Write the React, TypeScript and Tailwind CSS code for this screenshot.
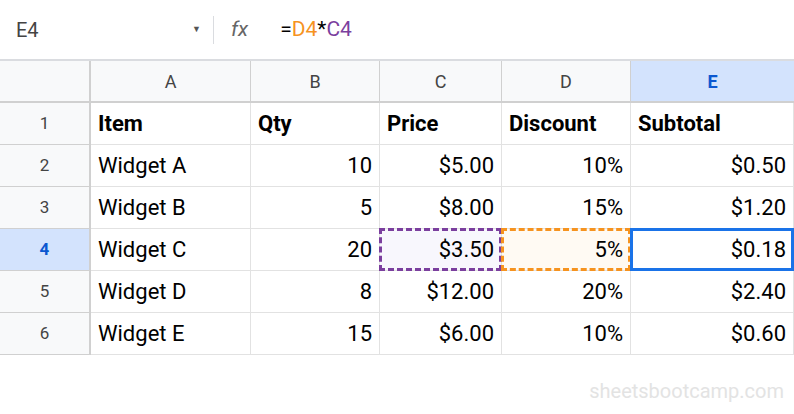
const cols = ["A", "B", "C", "D", "E"];
const rows: string[][] = [
  ["Item", "Qty", "Price", "Discount", "Subtotal"],
  ["Widget A", "10", "$5.00", "10%", "$0.50"],
  ["Widget B", "5", "$8.00", "15%", "$1.20"],
  ["Widget C", "20", "$3.50", "5%", "$0.18"],
  ["Widget D", "8", "$12.00", "20%", "$2.40"],
  ["Widget E", "15", "$6.00", "10%", "$0.60"],
];

export default function App() {
  return (
    <div className="w-[794px] h-[414px] bg-white relative overflow-hidden" style={{ fontFamily: "Roboto, Arial, sans-serif" }}>
      <div className="h-[59px] flex items-center">
        <div className="w-[213px] flex items-center pl-4 pr-3 text-[20px] text-[#444]">
          <span className="flex-1">E4</span>
          <span className="text-[9px] text-[#555]">▼</span>
        </div>
        <div className="w-px h-[28px] bg-[#dadce0]" />
        <span className="ml-[17px] text-[21px] italic text-[#666]">fx</span>
        <span className="ml-[32px] text-[21px] text-black">
          =<span className="text-[#f6931f]">D4</span>*<span className="text-[#7b3f9e]">C4</span>
        </span>
      </div>
      <div className="grid grid-cols-[91px_160px_129px_122px_129px_163px] grid-rows-[42px] auto-rows-[42px] border-t-2 border-[#dadce0]">
        <div className="bg-[#f8f9fa] border-r-2 border-b-2 border-[#d0d0d0]" />
        {cols.map((c) => (
          <div
            key={c}
            className={
              c === "E"
                ? "bg-[#d3e3fd] border-b-2 border-[#d0d0d0] flex items-center justify-center text-[18px] font-bold text-[#0b57d0]"
                : "bg-[#f8f9fa] border-r border-b-2 border-[#d0d0d0] flex items-center justify-center text-[18px] text-[#444]"
            }
          >
            {c}
          </div>
        ))}
        {rows.map((r, i) => (
          <>
            <div
              key={"h" + i}
              className={
                i === 3
                  ? "bg-[#d3e3fd] border-r-2 border-b border-[#d0d0d0] flex items-center justify-center text-[17px] font-bold text-[#0b57d0]"
                  : "bg-[#f8f9fa] border-r-2 border-b border-[#d0d0d0] flex items-center justify-center text-[17px] text-[#444]"
              }
            >
              {i + 1}
            </div>
            {r.map((v, j) => {
              const right = i > 0 && j > 0;
              let bg = "";
              let overlay = null;
              if (i === 3 && j === 2) {
                bg = "bg-[#f8f7fd]";
                overlay = <div className="absolute inset-[-1px] border-[3px] border-dashed border-[#7b3f9e]" />;
              }
              if (i === 3 && j === 3) {
                bg = "bg-[#fffaf3]";
                overlay = <div className="absolute inset-[-1px] border-[3px] border-dashed border-[#f6931f]" />;
              }
              if (i === 3 && j === 4) {
                overlay = <div className="absolute inset-[-1px] border-[3px] border-[#1a73e8]" />;
              }
              return (
                <div
                  key={i + "-" + j}
                  className={`relative border-r border-b border-[#e2e2e2] flex items-center px-[7px] text-[22px] text-black ${bg} ${right ? "justify-end" : ""} ${i === 0 ? "font-bold" : ""}`}
                >
                  {v}
                  {overlay}
                </div>
              );
            })}
          </>
        ))}
      </div>
      <div className="absolute right-[10px] bottom-[8px] text-[20px] text-[#e3e3e3]">sheetsbootcamp.com</div>
    </div>
  );
}
